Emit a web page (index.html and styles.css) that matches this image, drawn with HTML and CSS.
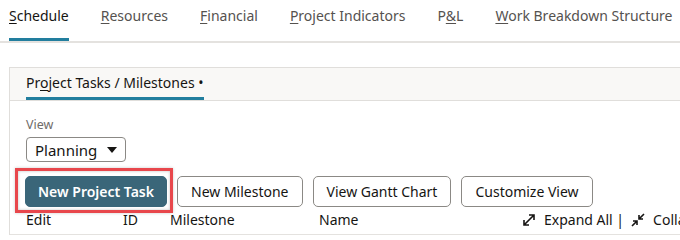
FILE: index.html
```html
<!DOCTYPE html>
<html>
  <head>
    <meta name="viewport" content="width=device-width, initial-scale=1">
    <link rel="stylesheet" href="styles.css">
  </head>
  <body>
    <div class="tabs">
      <div class="tab active"><u>S</u>chedule</div>
      <div class="tab"><u>R</u>esources</div>
      <div class="tab"><u>F</u>inancial</div>
      <div class="tab"><u>P</u>roject Indicators</div>
      <div class="tab">P<u>&amp;</u>L</div>
      <div class="tab"><u>W</u>ork Breakdown Structure</div>
    </div>

    <div class="panel">
      <div class="panel-head">
        <div class="subtab">Pr<u>o</u>ject Tasks / Milestones &bull;</div>
      </div>

      <div class="panel-body">
        <div class="label">View</div>
        <div class="select">
          <span>Planning</span>
          <span class="caret"></span>
        </div>

        <div class="toolbar">
          <button class="btn primary highlight">New Project Task</button>
          <button class="btn">New Milestone</button>
          <button class="btn">View Gantt Chart</button>
          <button class="btn">Customize View</button>
        </div>
      </div>

      <div class="columns">
        <div>Edit</div>
        <div>ID</div>
        <div>Milestone</div>
        <div>Name</div>
        <div class="tree-tools">
          <svg width="14" height="14" viewBox="0 0 14 14" fill="none" stroke="#161513" stroke-width="1.6">
            <path d="M2 12 L12 2 M7 2 H12 V7 M2 7 V12 H7"/>
          </svg>
          <span>Expand All |</span>
          <svg width="14" height="14" viewBox="0 0 14 14" fill="none" stroke="#161513" stroke-width="1.6">
            <path d="M13 1 L8 6 M8 2 V6 H12 M1 13 L6 8 M2 8 H6 V12"/>
          </svg>
          <span>Collapse All</span>
        </div>
      </div>
    </div>
  </body>
</html>
```

FILE: styles.css
```css
body { margin: 0; font-family: "Noto Sans", sans-serif; font-size: 14px; color: #161513; background: white; overflow: hidden; width: 680px; }
u { text-decoration: underline; text-underline-offset: 2px; }

.tabs { display: flex; padding-left: 9px; border-bottom: 2px solid #e4e2df; white-space: nowrap; }
.tab { padding: 6px 0 12px; line-height: 20px; margin-right: 32px; color: #55524f; border-bottom: 3px solid transparent; }
.tab:last-child { margin-right: 0; }
.tab.active { color: #161513; border-bottom-color: #227e9e; }

.panel { margin: 24px -20px 0 9px; border: 1px solid #e0dedb; border-bottom: none; }
.panel-head { background: #f9f8f6; border-bottom: 1px solid #e0dedb; padding-left: 16px; height: 32px; }
.subtab { display: inline-block; padding-top: 5px; line-height: 20px; height: 24px; border-bottom: 3px solid #227e9e; white-space: nowrap; }

.panel-body { padding: 0 16px; }
.label { margin-top: 16px; font-size: 12.5px; line-height: 16px; color: #6f6c69; }
.select { margin-top: 4px; box-sizing: border-box; width: 100px; height: 25px; border: 1px solid #8b8985; border-radius: 4px; display: flex; align-items: center; justify-content: space-between; padding: 0 8px; line-height: 20px; font-size: 15px; }
.caret { width: 0; height: 0; border-left: 5px solid transparent; border-right: 5px solid transparent; border-top: 6px solid #161513; }

.toolbar { display: flex; gap: 10px; margin-top: 14px; margin-left: -1px; }
.btn { height: 31px; padding: 0 13px; font-family: "Noto Sans", sans-serif; font-size: 14px; color: #161513; background: white; border: 1px solid #8b8985; border-radius: 5px; white-space: nowrap; }
.btn.primary { padding: 0 12px; background: #3a6679; border-color: #3a6679; color: white; font-weight: 600; }
.highlight { position: relative; }
.highlight::after { content: ""; position: absolute; top: -9px; bottom: -7px; left: -11px; right: -7px; border: 3px solid #e8474c; box-shadow: inset 0 0 3px rgba(0,0,0,0.25), 0 0 3px rgba(0,0,0,0.2); }

.columns { display: grid; grid-template-columns: 97px 47px 149px 203px auto; margin-top: 3px; padding: 0 0 4px 16px; line-height: 20px; border-bottom: 1px solid #e4e2df; white-space: nowrap; }
.tree-tools { display: flex; align-items: center; gap: 8px; }
.tree-tools span + svg { margin-left: -1px; }
```
